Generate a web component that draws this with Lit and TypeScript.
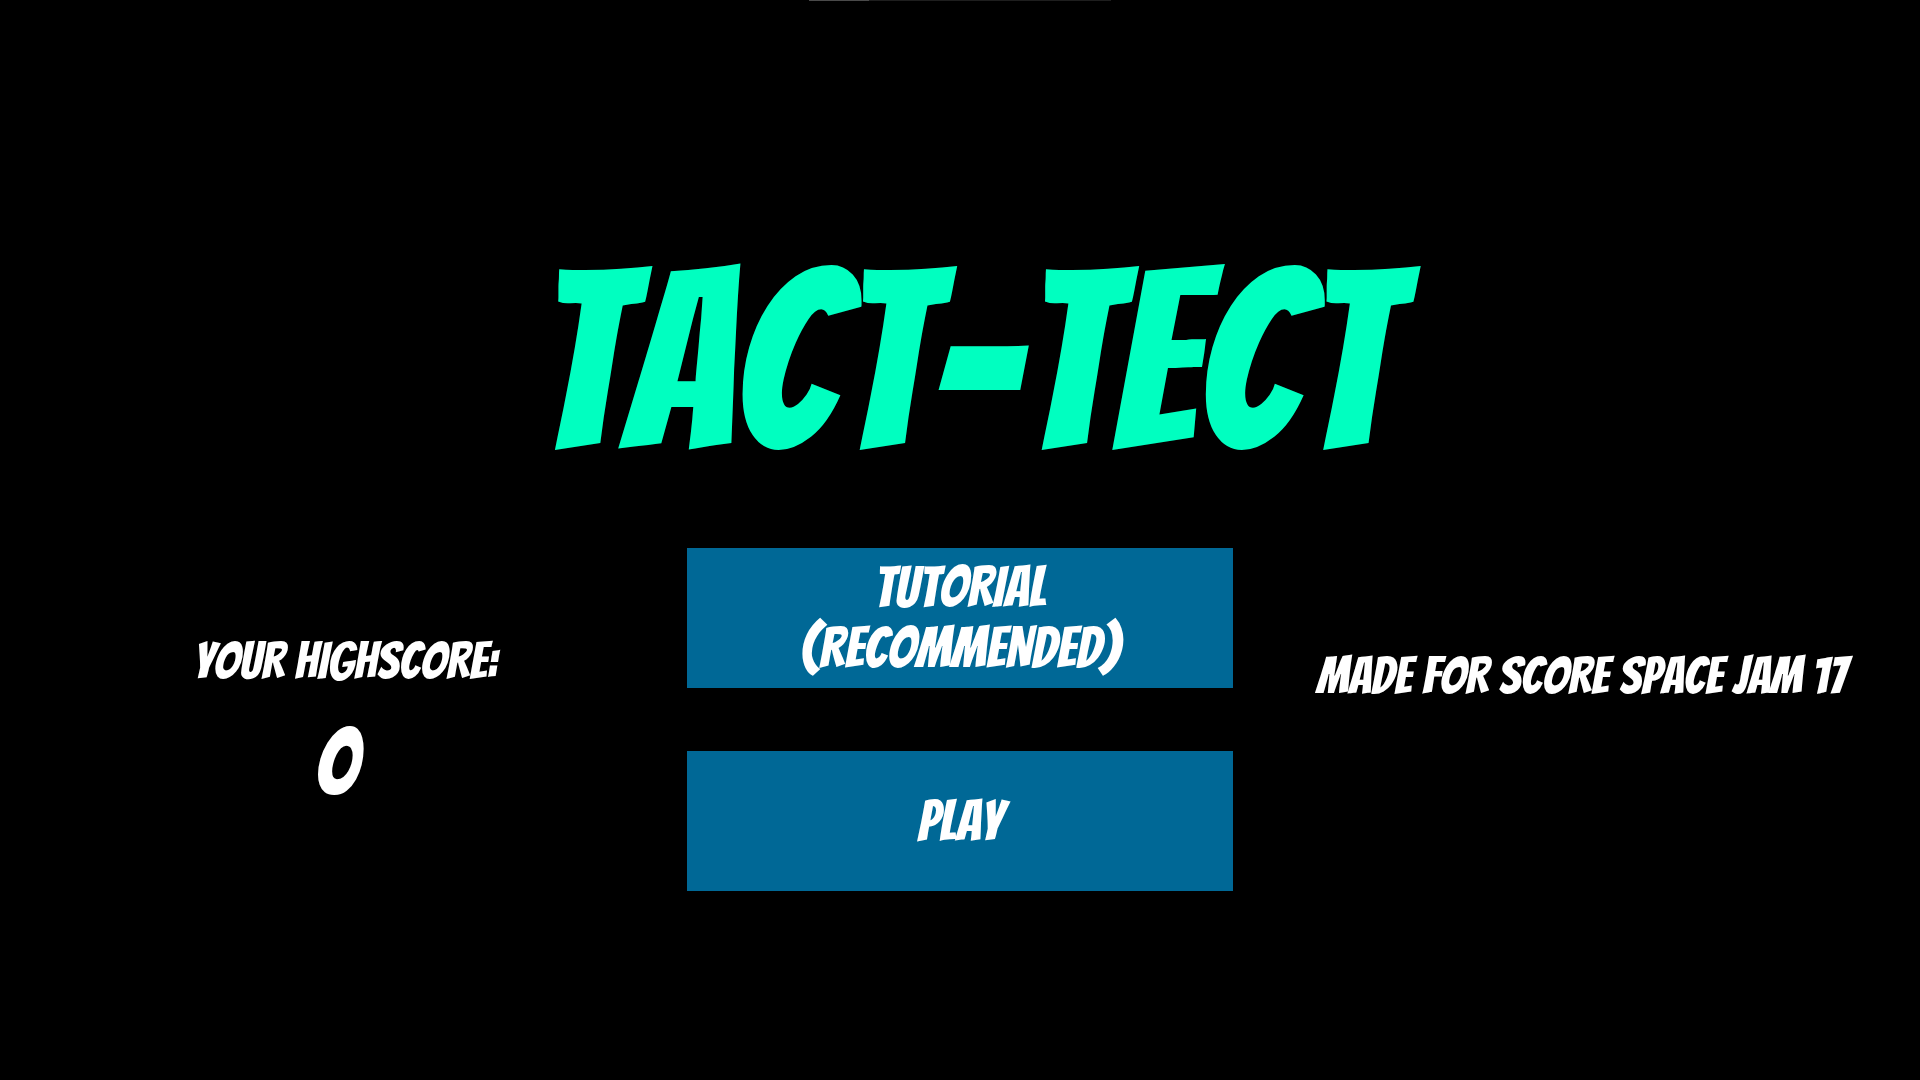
import { LitElement, html, css } from "lit";
import { customElement, property } from "lit/decorators.js";

@customElement("app-root")
export class AppRoot extends LitElement {
  @property({ type: Number }) highscore = 0;

  static styles = css`
    :host {
      display: block;
      min-height: 100vh;
      background: #000;
      color: #fff;
      font-family: "Bangers", "Liberation Sans Narrow", "Liberation Sans", sans-serif;
      font-weight: 400;
      font-kerning: none;
      text-transform: uppercase;
    }
    .edge {
      width: 302px;
      height: 1px;
      margin: 0 auto;
      background: linear-gradient(to right, #4a4a4a 60px, #1e1e1e 60px);
    }
    .title {
      margin: 0;
      padding: 251px 0 0 4px;
      color: #00ffc0;
      font-size: 252px;
      font-weight: 400;
      line-height: 220px;
      text-align: center;
      white-space: nowrap;
    }
    .columns {
      display: grid;
      grid-template-columns: 687fr 546fr 687fr;
      padding-top: 76px;
      text-align: center;
      font-size: 52px;
      line-height: 60px;
      white-space: nowrap;
    }
    .score {
      display: flex;
      flex-direction: column;
      padding: 83px 0 0 4px;
    }
    .value {
      padding-right: 18px;
      font-size: 94px;
      line-height: 142px;
    }
    .menu {
      display: flex;
      flex-direction: column;
      gap: 63px;
    }
    .choice {
      min-height: 140px;
      padding: 8px;
      border: 0;
      background: #006896;
      color: inherit;
      font: inherit;
      font-size: 57px;
      font-kerning: inherit;
      line-height: 61px;
      text-transform: inherit;
      cursor: pointer;
    }
    .choice:hover,
    .choice:focus-visible {
      background: #0079ad;
    }
    .credit {
      margin: 0;
      padding: 98px 0 0 10px;
    }
  `;

  render() {
    return html`
      <div class="edge"></div>
      <main>
        <h1 class="title">Tact-Tect</h1>
        <div class="columns">
          <section class="score">
            <label for="highscore">Your highscore:</label>
            <output class="value" id="highscore">${this.highscore}</output>
          </section>
          <nav class="menu">
            <button class="choice" type="button">Tutorial<br />(Recommended)</button>
            <button class="choice" type="button">Play</button>
          </nav>
          <p class="credit">Made for Score Space Jam 17</p>
        </div>
      </main>
    `;
  }
}
